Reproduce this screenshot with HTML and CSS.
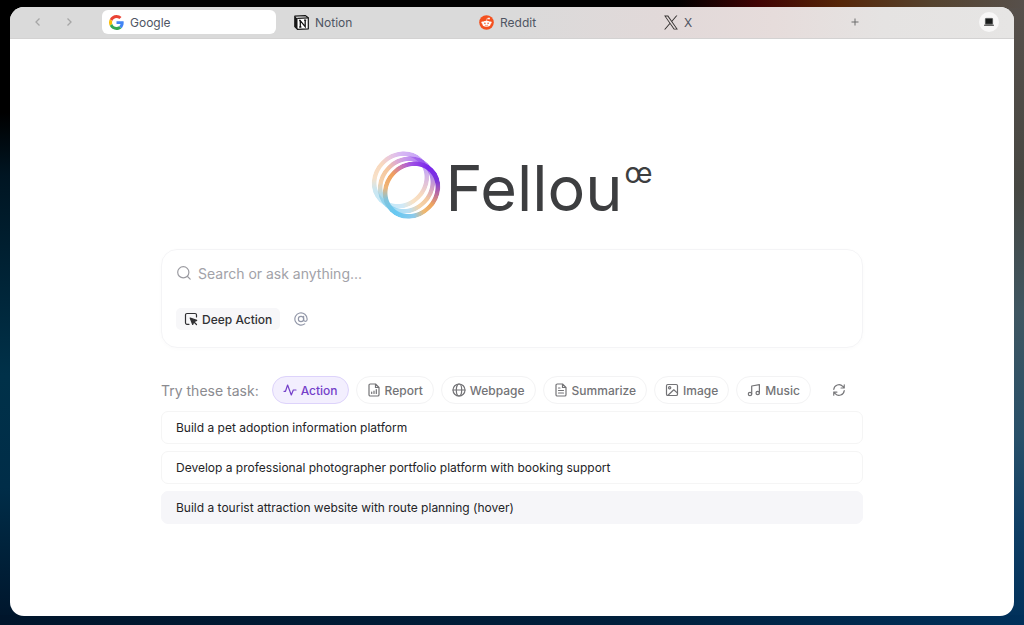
FILE: index.html
```html
<!DOCTYPE html>
<html lang="en">
<head>
<meta charset="utf-8">
<meta name="viewport" content="width=device-width, initial-scale=1">
<title>Fellou</title>
<link rel="stylesheet" href="styles.css">
</head>
<body>
<div class="window">
  <header class="tabbar">
    <nav class="history" aria-label="History">
      <button class="icon-btn" aria-label="Back"><svg width="12" height="12" viewBox="0 0 12 12"><path d="M7.5 2.500 4 6l3.500 3.500"/></svg></button>
      <button class="icon-btn" aria-label="Forward"><svg width="12" height="12" viewBox="0 0 12 12"><path d="M4.500 2.500 8 6 4.500 9.500"/></svg></button>
    </nav>
    <div class="tabs">
      <button class="tab tab-active">
        <svg width="15" height="15" viewBox="0 0 48 48"><path fill="#EA4335" d="M24 9.500c3.540 0 6.710 1.220 9.210 3.600l6.850-6.850C35.900 2.380 30.470 0 24 0 14.620 0 6.510 5.380 2.560 13.220l7.980 6.190C12.430 13.720 17.740 9.500 24 9.500z"/><path fill="#4285F4" d="M46.980 24.550c0-1.570-.15-3.090-.38-4.550H24v9.020h12.940c-.58 2.960-2.260 5.480-4.780 7.180l7.730 6c4.510-4.180 7.090-10.360 7.090-17.650z"/><path fill="#FBBC05" d="M10.530 28.590c-.48-1.450-.76-2.990-.76-4.590s.27-3.140.76-4.590l-7.980-6.190C.92 16.460 0 20.120 0 24c0 3.880.92 7.540 2.560 10.780l7.970-6.190z"/><path fill="#34A853" d="M24 48c6.480 0 11.930-2.130 15.890-5.810l-7.730-6c-2.150 1.450-4.920 2.300-8.160 2.300-6.260 0-11.570-4.220-13.470-9.910l-7.980 6.190C6.510 42.620 14.620 48 24 48z"/></svg>
        <span>Google</span>
      </button>
      <button class="tab">
        <svg width="15" height="15" viewBox="0 0 15 15"><path d="M.8 1.200 11.200.6 14.300 2.800v11L3.500 14.400.8 11.500z" fill="#fff" stroke="#151515" stroke-width="1.200" stroke-linejoin="round"/><path d="M.8 1.200 3.500 3.500v10.900L.8 11.500z" fill="#151515"/><path d="M3.200 3.400 14.300 2.800" stroke="#151515" stroke-width="1.200"/><path d="M6.300 11.900V5.700l4.900 5.900V5.200M5.100 5.600h1.800M10 5.200h2.200M5.200 12h2.200" fill="none" stroke="#151515" stroke-width="1.300"/></svg>
        <span>Notion</span>
      </button>
      <button class="tab">
        <svg width="15" height="15" viewBox="0 0 15 15"><circle cx="7.500" cy="7.500" r="7.300" fill="#f4501e"/><ellipse cx="7.500" cy="8.800" rx="4.200" ry="3" fill="#fff"/><circle cx="3.400" cy="7.600" r="1.100" fill="#fff"/><circle cx="11.600" cy="7.600" r="1.100" fill="#fff"/><circle cx="10" cy="3.500" r=".9" fill="#fff"/><path d="M7.500 6.200 8.200 3.300l1.800.3" fill="none" stroke="#fff" stroke-width=".6"/><circle cx="5.900" cy="8.300" r=".8" fill="#f4501e"/><circle cx="9.100" cy="8.300" r=".8" fill="#f4501e"/><path d="M5.900 10.100q1.600 1 3.200 0" fill="none" stroke="#f4501e" stroke-width=".6"/></svg>
        <span>Reddit</span>
      </button>
      <button class="tab">
        <svg width="14" height="15" viewBox="0 0 24 24"><path fill="#33302f" d="M14.200 10.200 23 0h-2.100l-7.600 8.800L7.200 0H.2l9.200 13.300L.2 24h2.100l8-9.300 6.500 9.300h7zM3 1.600h3.200l14.900 20.900h-3.300z"/></svg>
        <span>X</span>
      </button>
      <button class="icon-btn new-tab" aria-label="New tab"><svg width="12" height="12" viewBox="0 0 12 12"><path d="M6 2.500v7M2.500 6h7"/></svg></button>
    </div>
    <button class="device" aria-label="Device"><svg width="12" height="12" viewBox="0 0 12 12"><rect x="2.400" y="2.400" width="7.200" height="5.600" rx=".5" fill="#1b1d1d" stroke="#515353" stroke-width=".8"/><path d="M1.600 8.400h8.800l.8 1.400H.8z" fill="#333"/></svg></button>
  </header>
  <main class="page">
    <h1 class="logo">
      <span class="rings" aria-hidden="true"><i class="ring ring-1"></i><i class="ring ring-2"></i><i class="ring ring-3"></i></span>
      <span class="wordmark">Fellou</span><span class="mark">œ</span>
    </h1>
    <form class="search">
      <label class="query">
        <svg class="line" width="16" height="16" viewBox="0 0 16 16"><circle cx="7.300" cy="7.300" r="5.600"/><path d="m11.500 11.500 2.700 2.700"/></svg>
        <input type="text" placeholder="Search or ask anything..." aria-label="Search or ask anything">
      </label>
      <div class="tools">
        <button type="button" class="deep"><svg class="line" width="14" height="14" viewBox="0 0 14 14"><path d="M5 12.300H3A1.500 1.500 0 0 1 1.500 10.800V3A1.500 1.500 0 0 1 3 1.500h8A1.500 1.500 0 0 1 12.500 3v2"/><path fill="currentColor" d="m6.200 6 6.500 2.400-2.800 1.200-1.200 2.900z"/><path d="m10 10 2.500 2.500"/></svg>Deep Action</button>
        <button type="button" class="at" aria-label="Mention"><svg class="line" width="14" height="14" viewBox="0 0 24 24"><circle cx="12" cy="12" r="4.500"/><path d="M16.500 7.500V13a3 3 0 0 0 6 0v-1a10.500 10.500 0 1 0-4.200 8.400"/></svg></button>
      </div>
    </form>
    <section class="suggest">
      <div class="chips">
        <span class="chips-label">Try these task:</span>
        <button class="chip chip-active"><svg class="line" width="14" height="14" viewBox="0 0 14 14"><path d="M1 8.300h1.500L4.600 2l3.700 10 2-5h2.700"/></svg>Action</button>
        <button class="chip"><svg class="line" width="14" height="14" viewBox="0 0 14 14"><path d="M8.500 1H3.300A1.300 1.300 0 0 0 2 2.300v9.400A1.300 1.300 0 0 0 3.300 13h7.400a1.300 1.300 0 0 0 1.300-1.300V4.500zM8.500 1v3.500H12M4.700 10.500V9M7 10.500V8M9.300 10.500v-4"/></svg>Report</button>
        <button class="chip"><svg class="line" width="14" height="14" viewBox="0 0 14 14"><circle cx="7" cy="7" r="6"/><ellipse cx="7" cy="7" rx="2.700" ry="6"/><path d="M1 7h12"/></svg>Webpage</button>
        <button class="chip"><svg class="line" width="14" height="14" viewBox="0 0 14 14"><path d="M8.500 1H3.300A1.300 1.300 0 0 0 2 2.300v9.400A1.300 1.300 0 0 0 3.300 13h7.400a1.300 1.300 0 0 0 1.300-1.300V4.500zM8.500 1v3.500H12M4.500 5h1.500M4.500 7.500h5M4.500 10h5"/></svg>Summarize</button>
        <button class="chip"><svg class="line" width="14" height="14" viewBox="0 0 14 14"><rect x="1.500" y="1.500" width="11" height="11" rx="1.300"/><circle cx="4.700" cy="4.700" r="1.100"/><path d="m3 12.300 5.800-5.500 3.700 3.300"/></svg>Image</button>
        <button class="chip"><svg class="line" width="14" height="14" viewBox="0 0 14 14"><circle cx="3" cy="11" r="1.700"/><circle cx="10.700" cy="10" r="1.700"/><path d="M4.700 11V3l7.700-1.300V10"/></svg>Music</button>
        <button class="refresh" aria-label="Refresh"><svg class="line" width="14" height="14" viewBox="0 0 24 24"><path d="M3 11a9 9 0 0 1 15.500-5.200L21 8.500M21 3v5.500h-5.500M21 13a9 9 0 0 1-15.500 5.200L3 15.500M3 21v-5.500h5.500"/></svg></button>
      </div>
      <button class="task">Build a pet adoption information platform</button>
      <button class="task">Develop a professional photographer portfolio platform with booking support</button>
      <button class="task task-hover">Build a tourist attraction website with route planning (hover)</button>
    </section>
  </main>
</div>
</body>
</html>
```
FILE: styles.css
```css
* { box-sizing: border-box; }
body {
  margin: 0;
  min-height: 100vh;
  padding: 7px 10px 9px;
  display: flex;
  font-family: Inter, "Liberation Sans", sans-serif;
  background:
    linear-gradient(90deg, #000 0 66%, #400303 74%, #552608 82%, #55432f 91%, #57504b) top / 100% 8px no-repeat,
    linear-gradient(90deg, #00152b, #001f3b 60%, #00305a) bottom / 100% 10px no-repeat,
    linear-gradient(180deg, #57504b, #474742 30%, #3f5661 50%, #285069 70%, #103f65 84%, #00305a) right / 30px 100% no-repeat,
    linear-gradient(180deg, #000 0 18%, #001522 28%, #003149 60%, #002d48 78%, #00152b) left / 30px 100% no-repeat,
    #00152b;
}
button, input { font: inherit; color: inherit; border: 0; background: none; padding: 0; margin: 0; }
svg { display: block; flex: none; }
.line { fill: none; stroke: currentColor; stroke-width: 1.200; stroke-linecap: round; stroke-linejoin: round; }
.line[viewBox="0 0 24 24"] { stroke-width: 2; }

.window { flex: 1; display: flex; flex-direction: column; border-radius: 14px; overflow: hidden; background: #fff; }
.tabbar {
  display: flex;
  align-items: center;
  height: 32px;
  padding: 0 15px 1px 22px;
  border-bottom: 1px solid #d3d2d2;
  background: linear-gradient(90deg, #dadada 0 50%, #e2d9d9 66%, #e6dcdb 76%, #e5e3e2 87%, #e6e5e4);
  font-size: 12px;
  color: #4f5563;
}
.history { display: flex; gap: 19px; margin-right: 27px; }
.icon-btn svg { fill: none; stroke: #6d6d6d; stroke-width: 1; }
.history svg { stroke: #a6a6a6; stroke-width: 1.300; }
.tabs { display: flex; flex: 1; gap: 11px; align-items: center; }
.tab { display: flex; align-items: center; gap: 6px; flex: 0 1 174px; height: 24px; padding: 0 7px; border-radius: 6px; }
.tab-active { background: #fff; }
.new-tab { padding-left: 7px; }
.device { display: grid; place-items: center; width: 20px; height: 20px; border-radius: 50%; background: #f8f7f7; }

.page { width: 100%; max-width: 702px; margin: 0 auto; padding-top: 112px; }
.logo { display: flex; justify-content: center; align-items: flex-start; margin: 0; height: 68px; font: 400 63px/68px Inter, sans-serif; color: #3d3e40; }
.rings { position: relative; width: 68px; height: 68px; margin-right: 6px; }
.ring {
  position: absolute;
  width: 61px;
  height: 54px;
  border-radius: 50%;
  transform: rotate(-45deg);
  background: conic-gradient(from 45deg, #a050e4, #7a26ec 35deg, #7b35dc 70deg, #bd6e9c 100deg, #eda45f 125deg, #efb870 150deg, #8ccaec 175deg, #66c8f2 215deg, #82c4dc 250deg, #efb578 275deg, #f0a05c 310deg, #cb77b0 335deg, #a050e4);
  -webkit-mask: radial-gradient(closest-side, transparent 82%, #000 85%);
  mask: radial-gradient(closest-side, transparent 82%, #000 85%);
}
.ring-1 { left: -2px; top: 2px; opacity: .4; }
.ring-2 { left: 4px; top: 7px; opacity: .6; }
.ring-3 { left: 9px; top: 12px; }
.wordmark { padding-top: 3px; }
.mark { margin-left: 2px; font-size: 28px; line-height: 44px; }

.search { margin-top: 30px; padding: 14px 14px 17px; border: 1px solid #f4f4f6; border-radius: 16px; box-shadow: 0 1px 4px #00000005; }
.query { display: flex; align-items: center; gap: 6px; height: 18px; font-size: 14px; color: #9b9ba1; }
.query input { flex: 1; outline: 0; }
.query input::placeholder { color: #a2a2a8; opacity: 1; }
.tools { display: flex; align-items: center; gap: 14px; margin-top: 26px; }
.deep { display: flex; align-items: center; gap: 4px; height: 22px; padding: 0 8px; border-radius: 5px; background: #f7f7f9; font-size: 12px; font-weight: 500; color: #303033; }
.at { color: #9297a8; }

.suggest { display: flex; flex-direction: column; gap: 7px; margin-top: 28px; }
.chips { display: flex; align-items: center; gap: 7px; font-size: 12px; font-weight: 500; color: #737376; }
.chips-label { margin-right: 6px; font-size: 14px; font-weight: 400; white-space: nowrap; color: #8b8b90; }
.chip { display: flex; align-items: center; gap: 4px; height: 28px; padding: 0 10px; border: 1px solid #f3f3f4; border-radius: 14px; }
.chip-active { border-color: #ddd3fb; background: #f3effe; color: #7440c9; }
.refresh { margin-left: 14px; color: #77777a; }
.task { height: 33px; padding: 0 14px; border: 1px solid #f5f5f5; border-radius: 7px; text-align: left; font-size: 12px; color: #242427; }
.task-hover { border-color: #f6f6f9; background: #f6f6f9; }
```
